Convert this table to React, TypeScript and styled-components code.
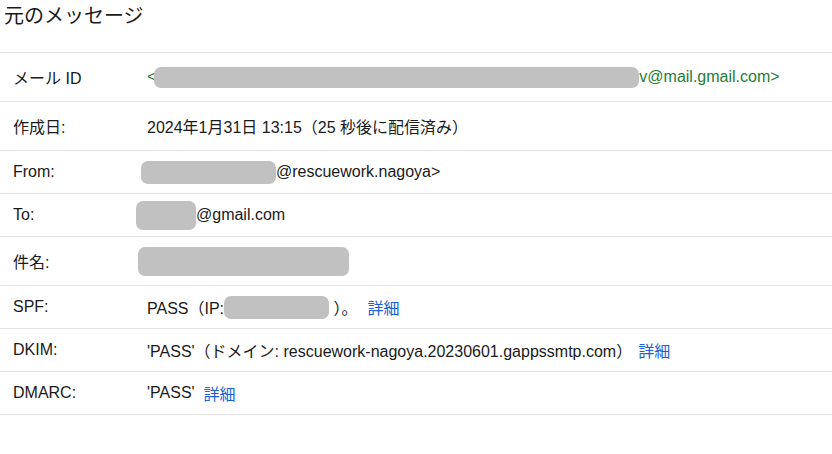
import React from 'react';
import styled, { createGlobalStyle } from 'styled-components';

const GlobalStyle = createGlobalStyle`
  body {
    margin: 0;
    background: #fff;
    font-family: 'Liberation Sans', Arial, 'Noto Sans CJK JP', sans-serif;
    color: #1a1a1a;
  }
`;

const Page = styled.div`
  width: 832px;
  height: 454px;
  overflow: hidden;
`;

const Title = styled.h1`
  margin: 0;
  height: 52px;
  padding: 0 4px;
  font-size: 20px;
  font-weight: 400;
  line-height: 32px;
  box-sizing: border-box;
`;

const Table = styled.div`
  display: flex;
  flex-direction: column;
  border-bottom: 1px solid #e3e3e3;
`;

const Row = styled.div<{ tall?: boolean }>`
  display: grid;
  grid-template-columns: 147px 1fr;
  align-items: center;
  height: ${(p) => (p.tall ? 49 : 43)}px;
  box-sizing: border-box;
  border-top: 1px solid #e3e3e3;
  font-size: 16px;
`;

const Label = styled.div`
  padding-left: 13px;
`;

const Value = styled.div<{ tone?: 'green' }>`
  display: flex;
  align-items: center;
  white-space: pre;
  color: ${(p) => (p.tone === 'green' ? '#1e7e34' : 'inherit')};
`;

const Redacted = styled.span<{ w: number; h: number; shift?: number }>`
  display: inline-block;
  width: ${(p) => p.w}px;
  height: ${(p) => p.h}px;
  margin-left: ${(p) => p.shift ?? 0}px;
  background: #c1c1c1;
  border-radius: 7px;
  flex: none;
`;

const Link = styled.a<{ gap?: number }>`
  color: #1a5fd6;
  text-decoration: none;
  cursor: pointer;
  margin-left: ${(p) => p.gap ?? 0}px;
`;

export default function App() {
  return (
    <Page>
      <GlobalStyle />
      <Title>元のメッセージ</Title>
      <Table>
        <Row tall>
          <Label>メール ID</Label>
          <Value tone="green">
            <span>&lt;</span>
            <Redacted w={485} h={21} shift={-2} />
            <span>v@mail.gmail.com&gt;</span>
          </Value>
        </Row>
        <Row tall>
          <Label>作成日:</Label>
          <Value>2024年1月31日 13:15（25 秒後に配信済み）</Value>
        </Row>
        <Row>
          <Label>From:</Label>
          <Value>
            <Redacted w={135} h={23} shift={-6} />
            <span>@rescuework.nagoya&gt;</span>
          </Value>
        </Row>
        <Row>
          <Label>To:</Label>
          <Value>
            <Redacted w={60} h={29} shift={-11} />
            <span>@gmail.com</span>
          </Value>
        </Row>
        <Row tall>
          <Label>件名:</Label>
          <Value>
            <Redacted w={211} h={29} shift={-9} />
          </Value>
        </Row>
        <Row>
          <Label>SPF:</Label>
          <Value>
            <span>PASS（IP:</span>
            <Redacted w={105} h={23} />
            <span> ）。</span>
            <Link gap={10}>詳細</Link>
          </Value>
        </Row>
        <Row>
          <Label>DKIM:</Label>
          <Value>
            <span>'PASS'（ドメイン: rescuework-nagoya.20230601.gappssmtp.com）</span>
            <Link gap={6}>詳細</Link>
          </Value>
        </Row>
        <Row>
          <Label>DMARC:</Label>
          <Value>
            <span>'PASS'</span>
            <Link gap={9}>詳細</Link>
          </Value>
        </Row>
      </Table>
    </Page>
  );
}
